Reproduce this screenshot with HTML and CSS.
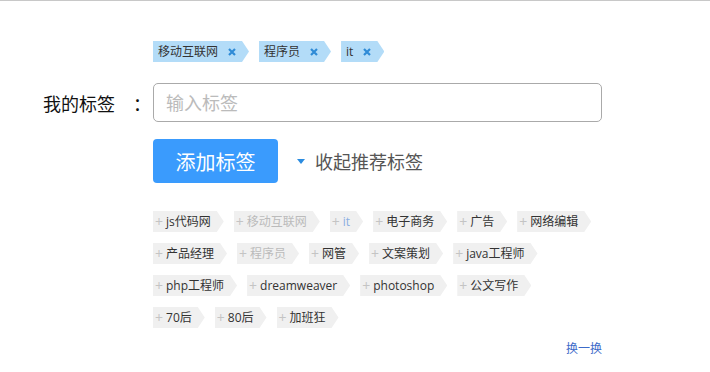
FILE: index.html
```html
<!DOCTYPE html>
<html lang="zh-CN">
<head>
    <meta charset="UTF-8">
    <meta name="viewport" content="width=device-width, initial-scale=1.0">
    <title>我的标签</title>
    <link rel="stylesheet" href="styles.css">
</head>
<body>
    <div class="page">
        <form class="tag-form">
            <!-- 已选标签 -->
            <div class="selected-tags">
                <span class="tag-chosen">移动互联网<i class="tag-remove"><svg viewBox="0 0 8 8" width="8" height="8"><path d="M1 1L7 7M7 1L1 7" stroke="#2f8bd6" stroke-width="2.2"/></svg></i></span>
                <span class="tag-chosen">程序员<i class="tag-remove"><svg viewBox="0 0 8 8" width="8" height="8"><path d="M1 1L7 7M7 1L1 7" stroke="#2f8bd6" stroke-width="2.2"/></svg></i></span>
                <span class="tag-chosen">it<i class="tag-remove"><svg viewBox="0 0 8 8" width="8" height="8"><path d="M1 1L7 7M7 1L1 7" stroke="#2f8bd6" stroke-width="2.2"/></svg></i></span>
            </div>

            <label class="field-label" for="tagInput">我的标签<span class="colon">：</span></label>
            <input type="text" id="tagInput" class="tag-input" placeholder="输入标签">

            <div class="actions">
                <button type="button" class="add-button">添加标签</button>
                <a href="#" class="toggle-link">收起推荐标签</a>
            </div>

            <!-- 推荐标签 -->
            <div class="recommend">
                <span class="tag">js代码网</span>
                <span class="tag tag-used">移动互联网</span>
                <span class="tag tag-current">it</span>
                <span class="tag">电子商务</span>
                <span class="tag">广告</span>
                <span class="tag">网络编辑</span>
                <span class="tag">产品经理</span>
                <span class="tag tag-used">程序员</span>
                <span class="tag">网管</span>
                <span class="tag">文案策划</span>
                <span class="tag">java工程师</span>
                <span class="tag">php工程师</span>
                <span class="tag">dreamweaver</span>
                <span class="tag">photoshop</span>
                <span class="tag">公文写作</span>
                <span class="tag">70后</span>
                <span class="tag">80后</span>
                <span class="tag">加班狂</span>
            </div>

            <div class="refresh">
                <a href="#">换一换</a>
            </div>
        </form>
    </div>
</body>
</html>
```

FILE: styles.css
```css
body {
    margin: 0;
    font-family: "Open Sans", "Noto Sans CJK SC", sans-serif;
    color: #333;
    background-color: #fff;
}

.page {
    border-top: 1px solid #c8c8c8;
    padding-top: 40px;
}

.tag-form {
    display: grid;
    grid-template-columns: 153px 449px;
    align-items: center;
}

.selected-tags {
    grid-column: 2;
    display: flex;
    gap: 10px;
    height: 21px;
}

.tag-chosen {
    display: inline-flex;
    align-items: center;
    height: 21px;
    padding: 0 13px 0 5px;
    font-size: 12px;
    line-height: 21px;
    color: #333;
    background-color: #b3dcf8;
    clip-path: polygon(0 0, calc(100% - 7px) 0, 100% 50%, calc(100% - 7px) 100%, 0 100%);
}

.tag-remove {
    display: inline-flex;
    margin-left: 10px;
}

.field-label {
    grid-column: 1;
    margin-top: 21px;
    padding-left: 43px;
    font-size: 18px;
    color: #111;
}

.colon {
    margin-left: 18px;
}

.tag-input {
    grid-column: 2;
    margin-top: 21px;
    box-sizing: border-box;
    width: 449px;
    height: 39px;
    padding: 0 12px;
    border: 1px solid #aaa;
    border-radius: 5px;
    font-family: "Open Sans", "Noto Sans CJK SC", sans-serif;
    font-size: 18px;
    outline: none;
}

.tag-input::placeholder {
    color: #bbb;
}

.actions {
    grid-column: 2;
    display: flex;
    align-items: center;
    margin-top: 17px;
}

.add-button {
    width: 125px;
    height: 44px;
    border: none;
    border-radius: 4px;
    background-color: #3a9bfd;
    color: #fff;
    font-family: "Noto Sans CJK SC", sans-serif;
    font-size: 20px;
    cursor: pointer;
}

.toggle-link {
    display: inline-flex;
    align-items: center;
    margin-left: 19px;
    font-size: 18px;
    color: #555;
    text-decoration: none;
}

.toggle-link::before {
    content: "";
    border-left: 4px solid transparent;
    border-right: 4px solid transparent;
    border-top: 5px solid #2b8ce0;
    margin-right: 10px;
}

.recommend {
    grid-column: 2;
    display: flex;
    flex-wrap: wrap;
    gap: 11px 10px;
    width: 439px;
    margin-top: 28px;
}

.tag {
    display: inline-flex;
    align-items: center;
    height: 21px;
    padding: 0 13px 0 2px;
    font-size: 12px;
    line-height: 21px;
    color: #333;
    background-color: #f0f0f0;
    cursor: pointer;
    clip-path: polygon(0 0, calc(100% - 7px) 0, 100% 50%, calc(100% - 7px) 100%, 0 100%);
}

.tag::before {
    content: "+";
    margin-right: 3px;
    font-size: 14px;
    color: #c4c4c4;
}

.tag-used {
    color: #bbb;
}

.tag-current {
    color: #8aaee2;
}

.refresh {
    grid-column: 2;
    margin-top: 10px;
    text-align: right;
    line-height: 18px;
}

.refresh a {
    font-size: 12px;
    color: #3d6bc9;
    text-decoration: none;
}
```
